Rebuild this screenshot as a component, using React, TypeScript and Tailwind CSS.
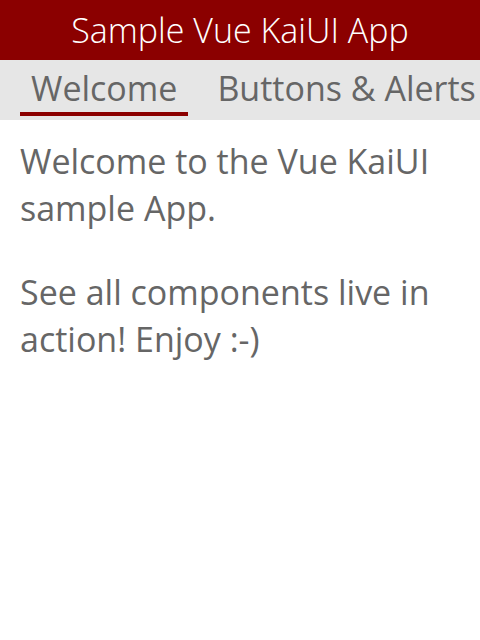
export default function App() {
  return (
    <div className="w-[480px] h-[640px] bg-white overflow-hidden" style={{ fontFamily: '"Open Sans", sans-serif' }}>
      <header className="h-[60px] bg-[#8b0000] flex items-center justify-center">
        <h1 className="text-white text-[34px] font-light leading-[46px]">Sample Vue KaiUI App</h1>
      </header>
      <nav className="h-[60px] bg-[#e6e6e6] flex pl-[20px] gap-[18px] overflow-hidden whitespace-nowrap">
        <div className="px-[11px] pt-[5px] flex flex-col text-[#666] text-[34px]">
          <span className="leading-[46px]">Welcome</span>
          <span className="h-[4px] mt-[1px] bg-[#8b0000] -mx-[11px]" />
        </div>
        <div className="px-[11px] pt-[5px] text-[#666] text-[34px] leading-[46px]">Buttons &amp; Alerts</div>
      </nav>
      <main className="px-[20px] pt-[18px] text-[#666] text-[34px] leading-[47px]">
        <p>Welcome to the Vue KaiUI sample App.</p>
        <p className="mt-[37px]">See all components live in action! Enjoy :-)</p>
      </main>
    </div>
  );
}
